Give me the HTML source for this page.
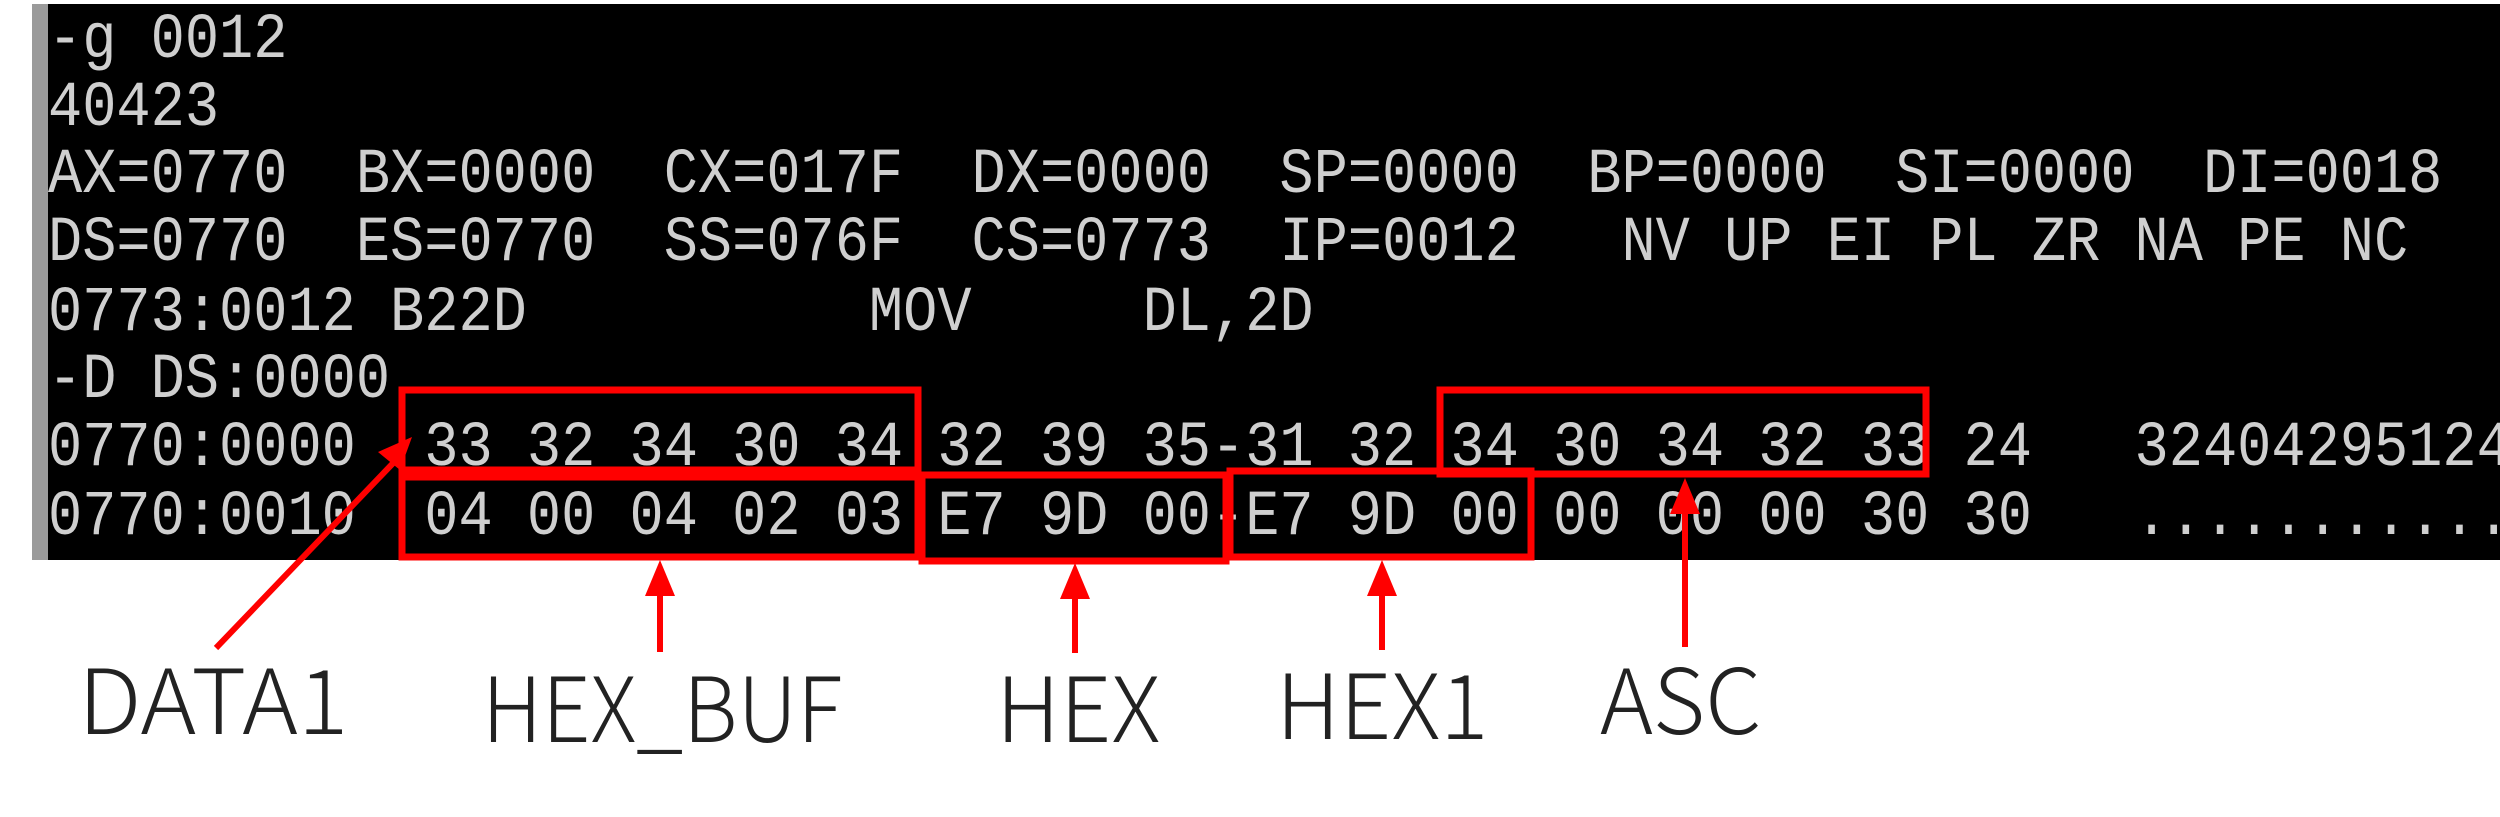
<!DOCTYPE html>
<html><head><meta charset="utf-8"><style>
html,body{margin:0;padding:0;background:#fff;width:2500px;height:817px;overflow:hidden;position:relative}
#term{position:absolute;left:32px;top:4px;width:2468px;height:556px;background:#000;border-left:16px solid #9a9a9a;box-sizing:border-box}
.l{position:absolute;left:48px;font-family:"Liberation Mono",monospace;font-size:57px;line-height:57px;color:#cfcfcf;white-space:pre;transform:scaleY(1.12);transform-origin:0 0}
.lab{position:absolute;font-family:"Noto Sans CJK SC","Liberation Sans",sans-serif;font-weight:300;font-size:90px;line-height:90px;color:#222;white-space:pre;transform-origin:0 0}
svg{position:absolute;left:0;top:0}
</style></head><body>
<div id="term"></div>
<div class="l" style="top:10px">-g 0012</div>
<div class="l" style="top:78px">40423</div>
<div class="l" style="top:145px">AX=0770  BX=0000  CX=017F  DX=0000  SP=0000  BP=0000  SI=0000  DI=0018</div>
<div class="l" style="top:213px">DS=0770  ES=0770  SS=076F  CS=0773  IP=0012   NV UP EI PL ZR NA PE NC</div>
<div class="l" style="top:283px">0773:0012 B22D          MOV     DL,2D</div>
<div class="l" style="top:350px">-D DS:0000</div>
<div class="l" style="top:418px">0770:0000  33 32 34 30 34 32 39 35-31 32 34 30 34 32 33 24   32404295124</div>
<div class="l" style="top:487px">0770:0010  04 00 04 02 03 E7 9D 00-E7 9D 00 00 00 00 30 30   ...........</div>
<svg width="2500" height="817" viewBox="0 0 2500 817">
<g fill="none" stroke="#f00" stroke-width="7">
<rect x="402" y="390" width="516" height="80"/>
<rect x="402" y="477" width="516" height="80"/>
<rect x="922" y="475" width="304" height="86"/>
<rect x="1230" y="471" width="301" height="86"/>
<rect x="1440" y="390" width="486" height="84"/>
</g>
<g stroke="#f00" stroke-width="6" fill="#f00">
<line x1="216" y1="648" x2="398" y2="458"/>
<polygon points="412,437 378,452 400,470" stroke="none"/>
<line x1="660" y1="652" x2="660" y2="585"/>
<polygon points="660,560 645,596 675,596" stroke="none"/>
<line x1="1075" y1="653" x2="1075" y2="588"/>
<polygon points="1075,563 1060,599 1090,599" stroke="none"/>
<line x1="1382" y1="650" x2="1382" y2="585"/>
<polygon points="1382,560 1367,596 1397,596" stroke="none"/>
<line x1="1685" y1="647" x2="1685" y2="503"/>
<polygon points="1685,478 1670,514 1700,514" stroke="none"/>
</g>
</svg>
<div class="lab" style="left:78px;top:650px;transform:scaleX(1.05)">DATA1</div>
<div class="lab" style="left:482px;top:658px;transform:scaleX(0.94)">HEX_BUF</div>
<div class="lab" style="left:996px;top:658px">HEX</div>
<div class="lab" style="left:1276px;top:655px">HEX1</div>
<div class="lab" style="left:1600px;top:650px">ASC</div>
</body></html>
